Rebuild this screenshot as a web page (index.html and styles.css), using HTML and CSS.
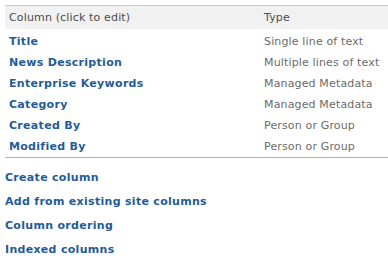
FILE: index.html
```html
<!DOCTYPE html>
<html lang="en">

<head>
    <meta charset="UTF-8">
    <title>Columns</title>
    <link rel="stylesheet" href="styles.css">
</head>

<body>
    <div class="columns">
        <div class="head row">
            <span class="col-name">Column (click to edit)</span>
            <span class="col-type">Type</span>
        </div>
        <div class="row"><a class="col-name" href="#">Title</a><span class="col-type">Single line of text</span></div>
        <div class="row"><a class="col-name" href="#">News Description</a><span class="col-type">Multiple lines of text</span></div>
        <div class="row"><a class="col-name" href="#">Enterprise Keywords</a><span class="col-type">Managed Metadata</span></div>
        <div class="row"><a class="col-name" href="#">Category</a><span class="col-type">Managed Metadata</span></div>
        <div class="row"><a class="col-name" href="#">Created By</a><span class="col-type">Person or Group</span></div>
        <div class="row"><a class="col-name" href="#">Modified By</a><span class="col-type">Person or Group</span></div>
    </div>

    <ul class="actions">
        <li><a href="#">Create column</a></li>
        <li><a href="#">Add from existing site columns</a></li>
        <li><a href="#">Column ordering</a></li>
        <li><a href="#">Indexed columns</a></li>
    </ul>
</body>

</html>
```

FILE: styles.css
```css
body {
    font-family: "DejaVu Sans", Verdana, sans-serif;
    font-size: 11px;
    letter-spacing: 0.15px;
    margin: 0;
    padding: 5px 0 0 5px;
    background: #fff;
}

a {
    color: #1f5c99;
    font-weight: bold;
    letter-spacing: 0.3px;
    text-decoration: none;
}

.columns {
    border-top: 1px solid #c8c8c8;
    border-bottom: 1px solid #b0b0b0;
}

.row {
    display: flex;
    height: 21px;
    align-items: center;
    padding-left: 4px;
}

.head {
    height: 23px;
    background-color: #f1f1f1;
    color: #4c4c4c;
    margin-bottom: 2px;
}

.col-name {
    width: 255px;
    flex-shrink: 0;
}

.col-type {
    color: #6b6b6b;
}

.head .col-type {
    color: #4c4c4c;
}

.actions {
    list-style: none;
    margin: 0;
    padding: 12px 0 0 0;
}

.actions li {
    height: 24px;
    line-height: 16px;
}
```
